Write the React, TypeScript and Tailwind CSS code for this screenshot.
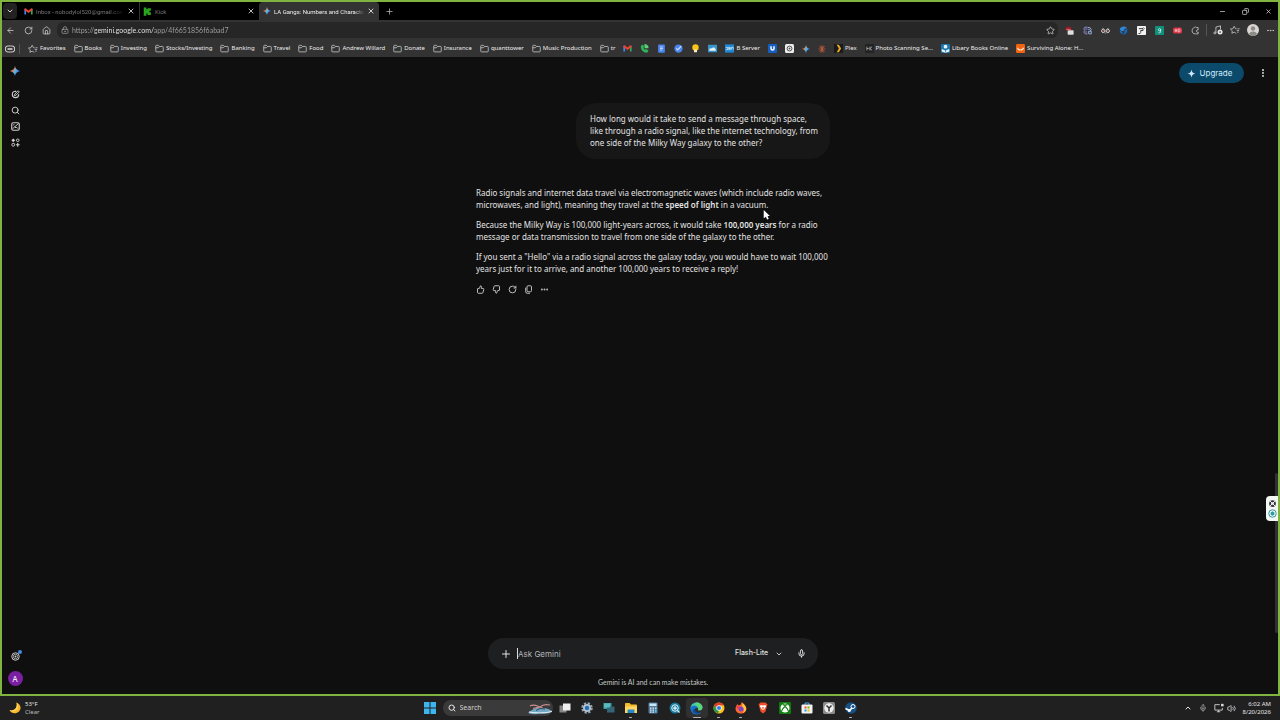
import { useState } from 'react';
import type { ReactNode } from 'react';
import {
  ArrowLeft,
  ChevronDown,
  ChevronUp,
  Copy,
  Ellipsis,
  EllipsisVertical,
  House,
  LockKeyhole,
  Mic,
  Minus,
  Plus,
  RotateCw,
  Search,
  Star,
  Volume2,
  X,
} from 'lucide-react';

interface Bookmark {
  label?: string;
  title: string;
  icon: ReactNode;
}

interface IconItem {
  title: string;
  icon: ReactNode;
  running?: boolean;
  active?: boolean;
}

function Svg({ className = 'size-[9px]', children }: { className?: string; children: ReactNode }) {
  return (
    <svg viewBox="0 0 24 24" className={`${className} shrink-0`} fill="none" aria-hidden="true">
      {children}
    </svg>
  );
}

const FolderIcon = () => (
  <Svg>
    <path d="M2 19V5.500a2 2 0 0 1 2-2h5l3 3h8a2 2 0 0 1 2 2V19a2 2 0 0 1-2 2H4a2 2 0 0 1-2-2zM2 10h7l3-3.500" stroke="#d0d0d0" strokeWidth="2" />
  </Svg>
);

const GmailIcon = () => (
  <Svg>
    <path d="M1 20V5l4.500 3v12z" fill="#4285f4" />
    <path d="M23 20V5l-4.500 3v12z" fill="#34a853" />
    <path d="M1 8V5c0-2 2-2.500 3.500-1.500L12 9l7.500-5.500C21 2.500 23 3 23 5v3l-11 8z" fill="#ea4335" />
  </Svg>
);

function Spark({ className, id }: { className?: string; id: string }) {
  return (
    <Svg className={className}>
      <defs>
        <linearGradient id={id} x1="1" y1="6" x2="23" y2="17" gradientUnits="userSpaceOnUse">
          <stop offset="0" stopColor="#f6c344" />
          <stop offset="0.3" stopColor="#ea6a5e" />
          <stop offset="0.48" stopColor="#5fc3c9" />
          <stop offset="0.7" stopColor="#4f8ff7" />
          <stop offset="1" stopColor="#3f7df0" />
        </linearGradient>
      </defs>
      <path d="M12 0c1.500 7 5 10.500 12 12-7 1.500-10.500 5-12 12C10.500 17 7 13.500 0 12 7 10.500 10.500 7 12 0z" fill={`url(#${id})`} />
    </Svg>
  );
}

const StarLines = () => (
  <Svg className="size-[10px]">
    <path d="M15 20l-5-2.800L4.500 20l1-6L1 9.800l6-1L10 3l3 5.800 3 .500M16 13h6M17 17h4M18 9h5" stroke="#cfcfcf" strokeWidth="1.800" strokeLinejoin="round" />
  </Svg>
);

const bookmarks: Bookmark[] = [
  { label: 'Favorites', title: 'Favorites', icon: <StarLines /> },
  { label: 'Books', title: 'Books', icon: <FolderIcon /> },
  { label: 'Investing', title: 'Investing', icon: <FolderIcon /> },
  { label: 'Stocks/Investing', title: 'Stocks/Investing', icon: <FolderIcon /> },
  { label: 'Banking', title: 'Banking', icon: <FolderIcon /> },
  { label: 'Travel', title: 'Travel', icon: <FolderIcon /> },
  { label: 'Food', title: 'Food', icon: <FolderIcon /> },
  { label: 'Andrew Willard', title: 'Andrew Willard', icon: <FolderIcon /> },
  { label: 'Donate', title: 'Donate', icon: <FolderIcon /> },
  { label: 'Insurance', title: 'Insurance', icon: <FolderIcon /> },
  { label: 'quanttower', title: 'quanttower', icon: <FolderIcon /> },
  { label: 'Music Production', title: 'Music Production', icon: <FolderIcon /> },
  { label: 'tr', title: 'tr', icon: <FolderIcon /> },
  { title: 'Gmail', icon: <GmailIcon /> },
  {
    title: 'Voice',
    icon: (
      <Svg>
        <path d="M2 5c0 10 6 18 17 18l4-6-7-4-3 2c-2-1-3-3-4-5l2-3-3-6z" fill="#2fb457" />
        <path d="M12 0a11 11 0 0 1 11 11H12z" fill="#5ad07c" />
      </Svg>
    ),
  },
  {
    title: 'Docs',
    icon: (
      <Svg>
        <rect x="3" y="1" width="18" height="22" rx="2" fill="#4a84ee" />
        <path d="M8 8h8M8 12h8M8 16h6" stroke="#dce8ff" strokeWidth="2" />
      </Svg>
    ),
  },
  {
    title: 'Tasks',
    icon: (
      <Svg>
        <circle cx="12" cy="12" r="11" fill="#4a84ee" />
        <path d="M6 12l4 4 9-10" stroke="#cfe0ff" strokeWidth="3" />
      </Svg>
    ),
  },
  {
    title: 'Keep',
    icon: (
      <Svg>
        <circle cx="12" cy="9" r="8.500" fill="#fcc419" />
        <path d="M8 15h8v7H8z" fill="#f5e9c0" />
      </Svg>
    ),
  },
  {
    title: 'Weather',
    icon: (
      <Svg>
        <rect x="0" y="2" width="24" height="20" fill="#3a93c8" />
        <path d="M3 17c0-5 4-7 7-5 2-4 9-3 9 1 3 0 3 5 0 5H5z" fill="#e3f1f8" />
      </Svg>
    ),
  },
  {
    label: 'B Server',
    title: 'B Server',
    icon: (
      <Svg>
        <rect x="0" y="1" width="24" height="22" fill="#1d87d6" />
        <path d="M2 9h5v6H2M9 15h5V9H9v3h5M17 15V9h5v6" stroke="#d6ecfb" strokeWidth="2" />
      </Svg>
    ),
  },
  {
    title: 'Bitwarden',
    icon: (
      <Svg>
        <rect width="24" height="24" rx="3" fill="#155ec0" />
        <path d="M8 6v6a4 4 0 0 0 8 0V6" stroke="#fff" strokeWidth="4" />
      </Svg>
    ),
  },
  {
    title: 'ChatGPT',
    icon: (
      <Svg>
        <rect width="24" height="24" rx="4" fill="#eee" />
        <circle cx="12" cy="12" r="6.500" stroke="#444" strokeWidth="2.500" />
        <circle cx="12" cy="12" r="2.500" fill="#555" />
      </Svg>
    ),
  },
  { title: 'Gemini', icon: <Spark id="spark-bookmark" className="size-2" /> },
  {
    title: 'Claude',
    icon: (
      <Svg className="size-2">
        <path d="M12 1v22M1 12h22M4 4l16 16M20 4L4 20M8 2l8 20M16 2L8 22" stroke="#c05a3e" strokeWidth="2.200" />
      </Svg>
    ),
  },
  {
    label: 'Plex',
    title: 'Plex',
    icon: (
      <Svg>
        <rect width="24" height="24" fill="#191a1c" />
        <path d="M7 2h6l6 10-6 10H7l6-10z" fill="#eba81c" />
      </Svg>
    ),
  },
  {
    label: 'Photo Scanning Se...',
    title: 'Photo Scanning Service',
    icon: (
      <Svg>
        <rect width="24" height="24" fill="#222" />
        <path d="M5 7v10M5 12h5M13 7v10M19 7l-6 5 6 5" stroke="#bbb" strokeWidth="2" />
      </Svg>
    ),
  },
  {
    label: 'Libary Books Online',
    title: 'Libary Books Online',
    icon: (
      <Svg>
        <rect width="24" height="24" rx="3" fill="#1b77ad" />
        <circle cx="12" cy="7" r="5" fill="#e8f3f9" />
        <path d="M2 13l10 4 10-4v7l-10 3-10-3z" fill="#e8f3f9" />
        <path d="M12 14v8" stroke="#1b77ad" strokeWidth="2" />
      </Svg>
    ),
  },
  {
    label: 'Surviving Alone: H...',
    title: 'Surviving Alone',
    icon: (
      <Svg>
        <rect width="24" height="24" rx="3" fill="#f0640f" />
        <path d="M4 10c2 8 14 8 16 0" stroke="#fbe3cf" strokeWidth="3" />
      </Svg>
    ),
  },
];

const extensions: IconItem[] = [
  {
    title: 'Ad blocker',
    icon: (
      <Svg>
        <path d="M2 4l6-3 9 3v8H2z" fill="#9e1b24" />
        <rect x="7" y="11" width="16" height="12" rx="2" fill="#dedede" />
        <path d="M3 9h12" stroke="#e88" strokeWidth="2" />
      </Svg>
    ),
  },
  {
    title: 'Translate',
    icon: (
      <Svg>
        <path d="M12 3H5L2 8l3 4-3 4 4 5h6M6 8h6M6 16h5" stroke="#8f8fe0" strokeWidth="2.500" />
        <path d="M13 4h5l4 5-2 4M14 9h4M16 21h6v-7h-7v7" stroke="#9ab6e8" strokeWidth="2.500" />
      </Svg>
    ),
  },
  {
    title: 'Reader',
    icon: (
      <Svg>
        <circle cx="6" cy="13" r="4.500" stroke="#ddd" strokeWidth="2.500" />
        <circle cx="18" cy="13" r="4.500" stroke="#ddd" strokeWidth="2.500" />
        <path d="M4 6l4 2M20 6l-4 2M10 19h4" stroke="#aaa" strokeWidth="2" />
        <circle cx="6" cy="13" r="1.800" fill="#d66" />
        <circle cx="18" cy="13" r="1.800" fill="#d66" />
      </Svg>
    ),
  },
  {
    title: 'Sync',
    icon: (
      <Svg>
        <path d="M2 8c3-8 15-9 20-2-5-1-9 1-9 7H7c-3 0-4-2-5-5z" fill="#2f86d6" />
        <path d="M22 9c2 9-6 16-14 13 5-1 7-4 6-9l4-5z" fill="#1567b8" />
        <path d="M2 12c0 5 3 8 6 9 2-2 2-4 1-6z" fill="#1a72c4" />
      </Svg>
    ),
  },
  {
    title: 'Notes',
    icon: (
      <Svg>
        <rect width="24" height="24" rx="2" fill="#f2f2f2" />
        <path d="M5 7h11v5h-6v6M4 20h5M17 4l3 3" stroke="#333" strokeWidth="2.500" />
      </Svg>
    ),
  },
  {
    title: 'Grammar',
    icon: (
      <Svg>
        <rect width="24" height="24" rx="2" fill="#10917c" />
        <circle cx="12" cy="10" r="3" stroke="#dff5f0" strokeWidth="2" />
        <path d="M15 8v8c0 3-5 3-6 1" stroke="#dff5f0" strokeWidth="2" />
      </Svg>
    ),
  },
  {
    title: 'HD video',
    icon: (
      <Svg>
        <rect y="4" width="24" height="16" rx="5" fill="#dc3747" />
        <path d="M6 8v8M6 12h4M10 8v8M14 8v8h2c4 0 4-8 0-8z" stroke="#ffc9cd" strokeWidth="2" />
      </Svg>
    ),
  },
  {
    title: 'Extensions',
    icon: (
      <Svg>
        <path d="M19 8V4h-5a3 3 0 0 0-5 0C4 6 3 9 3 13c0 5 3 8 9 8h7v-5a3 3 0 1 1 0-5z" stroke="#cfcfcf" strokeWidth="2" />
      </Svg>
    ),
  },
];

const taskbarApps: IconItem[] = [
  {
    title: 'Task View',
    icon: (
      <Svg className="size-3">
        <rect x="1" y="7" width="14" height="14" fill="#858585" />
        <rect x="8" y="3" width="15" height="14" fill="#efefef" />
      </Svg>
    ),
  },
  {
    title: 'Settings',
    icon: (
      <Svg className="size-3">
        <circle cx="12" cy="12" r="9.500" stroke="#93a6b5" strokeWidth="4" strokeDasharray="4.500 3" />
        <circle cx="12" cy="12" r="8" fill="#b5c4ce" />
        <circle cx="12" cy="12" r="4.500" fill="#2471b8" />
      </Svg>
    ),
  },
  {
    title: 'Remote Desktop',
    icon: (
      <Svg className="size-3">
        <rect x="1" y="2" width="16" height="12" rx="1" fill="#3f9ea5" />
        <rect x="8" y="9" width="15" height="12" rx="1" fill="#356675" />
        <rect x="2" y="3" width="12" height="8" fill="#57bcc0" />
      </Svg>
    ),
  },
  {
    title: 'File Explorer',
    running: true,
    icon: (
      <Svg className="size-3">
        <path d="M0 4c0-1 1-2 2-2h7l3 3h10c1 0 2 1 2 2v14H0z" fill="#f5bd2d" />
        <path d="M0 9h24v12c0 1-1 1-2 1H2c-1 0-2 0-2-1z" fill="#fcd765" />
        <path d="M5 22v-5c0-1 1-2 2-2h10c1 0 2 1 2 2v5z" fill="#2587ca" />
      </Svg>
    ),
  },
  {
    title: 'Calculator',
    icon: (
      <Svg className="size-3">
        <rect x="3" y="1" width="18" height="22" rx="2" fill="#557b98" />
        <rect x="5" y="3" width="14" height="5" fill="#c7e6f7" />
        <path d="M6 12h3M11 12h3M16 12h3M6 16h3M11 16h3M6 20h3M11 20h3" stroke="#dcebf4" strokeWidth="2.500" />
        <path d="M17.500 15v6" stroke="#4fbdf5" strokeWidth="3" />
      </Svg>
    ),
  },
  {
    title: 'Screen Capture',
    icon: (
      <Svg className="size-3">
        <circle cx="12" cy="12" r="11" fill="#177a9e" />
        <circle cx="12" cy="12" r="6.500" stroke="#e5f6fb" strokeWidth="2" />
        <path d="M12 8v8M8 12h8M17 17l4 4" stroke="#e5f6fb" strokeWidth="2.500" />
      </Svg>
    ),
  },
  {
    title: 'Edge',
    running: true,
    active: true,
    icon: (
      <Svg className="size-[13px]">
        <path d="M1 12C1 5 6 1 12 1c7 0 11 5 11 9 0 5-5 6-8 5 1-5-4-7-8-5-4 1-6 4-6 2z" fill="#3fc6b8" />
        <path d="M12 1c7 0 11 5 11 9 0 5-5 6-8 5 1-3 0-8-6-8z" fill="#5bd67b" />
        <path d="M1 12c0-4 4-6 8-5 3 0 5 2 5 4-4-2-7 4-3 8 3 3 7 2 10 0-2 3-5 4-9 4C6 23 1 18 1 12z" fill="#1674cf" />
        <path d="M10 12c-3 5 2 10 9 7-3 3-8 4-12 1-3-3-2-7 3-8z" fill="#0c4c9c" />
      </Svg>
    ),
  },
  {
    title: 'Chrome',
    running: true,
    icon: (
      <Svg className="size-3">
        <circle cx="12" cy="12" r="11" fill="#fbc116" />
        <path d="M2.500 6.500a11 11 0 0 1 19 0L12 7l-4.500 7z" fill="#e33b2e" />
        <path d="M2.500 6.500L7.500 15l4.500 2-2 6A11 11 0 0 1 2.500 6.500z" fill="#279847" />
        <circle cx="12" cy="12" r="5.500" fill="#fff" />
        <circle cx="12" cy="12" r="4.200" fill="#327fe8" />
      </Svg>
    ),
  },
  {
    title: 'Firefox',
    running: true,
    icon: (
      <Svg className="size-3">
        <path d="M3 7l2-3 2 3 5-2c0-2 1-4 2-5 1 3 8 6 9 13 0 6-5 10-11 10S1 19 1 13c0-2 1-4 2-6z" fill="#ff6a2b" />
        <path d="M15 2c4 3 8 7 7 13-1 4-4 6-6 7 3-6 2-10-2-13z" fill="#ffc83c" />
        <circle cx="12" cy="14" r="5" fill="#7a45c8" />
        <path d="M3 8c3-1 6 0 8 2-3 0-4 2-3 4-4 1-6-2-5-6z" fill="#ef3f55" />
      </Svg>
    ),
  },
  {
    title: 'Brave',
    icon: (
      <Svg className="size-3">
        <path d="M7 1h10l4 4-1 3-3 11-5 4-5-4L4 8 3 5z" fill="#f04e2b" />
        <path d="M7 6l5 1 5-1 1 3-3 5-3 2-3-2-3-5z" fill="#fff" />
        <path d="M9 10l3 1 3-1-3 5z" fill="#f04e2b" />
      </Svg>
    ),
  },
  {
    title: 'Xbox',
    icon: (
      <Svg className="size-3">
        <rect width="24" height="24" rx="2" fill="#107c10" />
        <circle cx="12" cy="12" r="9" fill="#fff" />
        <path d="M5 19c1-5 4-8 7-10 3 2 6 5 7 10M7 5c2 0 4 1 5 2 1-1 3-2 5-2" stroke="#107c10" strokeWidth="2.500" />
      </Svg>
    ),
  },
  {
    title: 'Microsoft Store',
    icon: (
      <Svg className="size-3">
        <path d="M8 6V2h8v4" stroke="#4aa9e8" strokeWidth="2" />
        <rect x="1" y="5" width="22" height="18" rx="2" fill="#f2f2f2" />
        <path d="M7 9h4v4H7z" fill="#f25022" />
        <path d="M13 9h4v4h-4z" fill="#7fba00" />
        <path d="M7 15h4v4H7z" fill="#00a4ef" />
        <path d="M13 15h4v4h-4z" fill="#ffb900" />
      </Svg>
    ),
  },
  {
    title: 'Clock',
    icon: (
      <Svg className="size-3">
        <rect width="24" height="24" rx="3" fill="#8b8b8b" />
        <circle cx="12" cy="12" r="9.500" fill="#ededed" />
        <path d="M7 7l5 5 5-5M12 12v7" stroke="#333" strokeWidth="3" />
      </Svg>
    ),
  },
  {
    title: 'Steam',
    running: true,
    icon: (
      <Svg className="size-3">
        <circle cx="12" cy="12" r="11.500" fill="#155287" />
        <circle cx="16" cy="9" r="4" stroke="#fff" strokeWidth="2" />
        <path d="M1 13l8 4 5-5" stroke="#fff" strokeWidth="3.500" />
        <circle cx="8.500" cy="17" r="3" fill="#fff" />
      </Svg>
    ),
  },
];

const sidebarItems: IconItem[] = [
  {
    title: 'New chat',
    icon: (
      <Svg>
        <path d="M14 3.500H11A8.500 8.500 0 1 0 20.500 12v-1" stroke="currentColor" strokeWidth="3" />
        <path d="M9 15l1-4 9-9 3 3-9 9z" stroke="currentColor" strokeWidth="2.500" />
      </Svg>
    ),
  },
  { title: 'Search chats', icon: <Search className="size-[9px]" strokeWidth={2.500} /> },
  {
    title: 'Images',
    icon: (
      <Svg>
        <rect x="2" y="2" width="20" height="20" rx="4" stroke="currentColor" strokeWidth="3" />
        <path d="M5 18l5-6 3 4 2-2 4 4M20 4L10 13" stroke="currentColor" strokeWidth="2.500" />
        <circle cx="7.500" cy="7.500" r="1.800" fill="currentColor" />
      </Svg>
    ),
  },
  {
    title: 'Apps',
    icon: (
      <Svg>
        <path d="M6 1L11 6l-5 5-5-5z" fill="currentColor" />
        <circle cx="18" cy="6" r="3.500" stroke="currentColor" strokeWidth="2.500" />
        <rect x="2.500" y="14.500" width="7" height="7" rx="2" stroke="currentColor" strokeWidth="2.500" />
        <path d="M18 13v10M13 18h10" stroke="currentColor" strokeWidth="3" />
      </Svg>
    ),
  },
];

const replyActions: IconItem[] = [
  {
    title: 'Good response',
    icon: (
      <Svg>
        <path d="M4 10l5-1 3-7c3 0 3 3 2 7h5c2 0 2 2 1.500 4l-2 7c0 1-1 2-2 2H6c-1 0-2-1-2-2z" stroke="currentColor" strokeWidth="2.500" strokeLinejoin="round" />
      </Svg>
    ),
  },
  {
    title: 'Bad response',
    icon: (
      <Svg>
        <path d="M20 14l-5 1-3 7c-3 0-3-3-2-7H5c-2 0-2-2-1.500-4l2-7c0-1 1-2 2-2H18c1 0 2 1 2 2z" stroke="currentColor" strokeWidth="2.500" strokeLinejoin="round" />
      </Svg>
    ),
  },
  { title: 'Redo', icon: <RotateCw className="size-[9px]" strokeWidth={2.500} /> },
  {
    title: 'Copy',
    icon: (
      <Svg>
        <rect x="8" y="2" width="12" height="16" rx="3" stroke="currentColor" strokeWidth="2.500" />
        <path d="M4.500 7v11a4 4 0 0 0 4 4H16" stroke="currentColor" strokeWidth="2.500" />
      </Svg>
    ),
  },
  { title: 'More', icon: <Ellipsis className="size-[9px]" strokeWidth={3} /> },
];

function TabBar() {
  return (
    <div className="flex h-[18px] items-stretch bg-black font-['Roboto',sans-serif]">
      <button aria-label="Search tabs" className="my-px ml-px mr-1 flex w-[14px] items-center justify-center rounded-sm bg-[#222]">
        <ChevronDown className="size-2 text-[#d6d6d6]" strokeWidth={3} />
      </button>
      <div className="flex w-[119px] items-center gap-[3px] border-r border-[#333] pl-[3px] pr-1 text-[#777]">
        <GmailIcon />
        <span className="min-w-0 flex-1 whitespace-nowrap [mask-image:linear-gradient(to_right,black_85%,transparent)]">Inbox - nobodylol520@gmail.con</span>
        <button aria-label="Close Inbox"><X className="size-2 text-[#ddd]" strokeWidth={2.500} /></button>
      </div>
      <div className="flex w-[119px] items-center gap-[3px] pl-[3px] pr-1 text-[#777]">
        <Svg>
          <path d="M2 1h7v5h3V3h9v7h-4v4h4v7h-9v-4H9v6H2z" fill="#28a51c" />
        </Svg>
        <span className="flex-1">Kick</span>
        <button aria-label="Close Kick"><X className="size-2 text-[#ddd]" strokeWidth={2.500} /></button>
      </div>
      <div className="flex w-[120px] items-center gap-[3px] rounded-t-sm bg-[#333] pl-1 pr-1 text-[#eee]">
        <Spark id="spark-tab" className="size-2" />
        <span className="min-w-0 flex-1 whitespace-nowrap [mask-image:linear-gradient(to_right,black_90%,transparent)]">LA Gangs: Numbers and Characte</span>
        <button aria-label="Close LA Gangs"><X className="size-2 text-[#eee]" strokeWidth={2.500} /></button>
      </div>
      <button aria-label="New tab" className="ml-1 flex w-3 items-center justify-center">
        <Plus className="size-[9px] text-[#bbb]" />
      </button>
      <div className="ml-auto flex items-center gap-4 pr-[6px] text-[#d6d6d6]">
        <button aria-label="Minimize"><Minus className="size-[7px]" strokeWidth={2.500} /></button>
        <button aria-label="Restore"><Copy className="size-[7px] -scale-x-100" strokeWidth={2.500} /></button>
        <button aria-label="Close window"><X className="size-[7px]" strokeWidth={2.500} /></button>
      </div>
    </div>
  );
}

function Toolbar() {
  return (
    <div className="flex h-5 items-center bg-[#333] text-[#d0d0d0]">
      <div className="flex items-center gap-[9px] pl-1 pr-[6px]">
        <button aria-label="Back"><ArrowLeft className="size-[9px]" strokeWidth={2} /></button>
        <button aria-label="Refresh"><RotateCw className="size-[9px]" strokeWidth={2} /></button>
        <button aria-label="Home"><House className="size-[9px]" strokeWidth={2} /></button>
      </div>
      <div className="flex h-4 flex-1 items-center gap-[3px] rounded-md bg-[#262626] pl-1 pr-[3px]">
        <LockKeyhole className="size-2 text-[#aaa]" />
        <input
          aria-label="Address"
          defaultValue="https://gemini.google.com/app/4f6651856f6abad7"
          className="flex-1 bg-[linear-gradient(to_right,#a3a3a3_23px,#f2f2f2_23px,#f2f2f2_82px,#a3a3a3_82px)] bg-clip-text font-['Lato',sans-serif] text-[7px] text-transparent outline-none"
        />
        <button aria-label="Add to favorites"><Star className="size-[9px]" /></button>
      </div>
      <div className="flex items-center gap-[9px] pl-[7px] pr-[6px]">
        {extensions.map((ext) => (
          <button key={ext.title} aria-label={ext.title}>{ext.icon}</button>
        ))}
      </div>
      <div className="flex items-center gap-[7px] border-l border-[#555] pl-[6px] pr-[3px]">
        <button aria-label="Media">
          <Svg className="size-[10px]">
            <path d="M7 19V5l11-3v8" stroke="#cfcfcf" strokeWidth="2" />
            <circle cx="4.500" cy="19" r="2.500" stroke="#cfcfcf" strokeWidth="2" />
            <circle cx="17" cy="17" r="6" fill="#e8e8e8" />
            <circle cx="17" cy="17" r="2" fill="#333" />
          </Svg>
        </button>
        <button aria-label="Favorites list"><StarLines /></button>
        <button aria-label="Profile">
          <Svg className="size-3">
            <circle cx="12" cy="12" r="12" fill="#d9d6d2" />
            <circle cx="12" cy="9" r="4.500" fill="#8d8b88" />
            <path d="M4 20c1-7 15-7 16 0-4 5-12 5-16 0z" fill="#8d8b88" />
          </Svg>
        </button>
        <button aria-label="Menu"><Ellipsis className="size-[9px]" /></button>
      </div>
    </div>
  );
}

function BookmarkBar() {
  return (
    <nav aria-label="Bookmarks" className="flex h-[17px] items-center gap-2 overflow-hidden bg-[#333] pl-[3px] text-[#eee]">
      <button aria-label="Games" className="border-r border-[#555] pr-1">
        <Svg className="size-[10px]">
          <rect x="1" y="5" width="22" height="14" rx="6" stroke="#ccc" strokeWidth="2.500" />
          <path d="M6 10h12v4H6z" fill="#ccc" />
        </Svg>
      </button>
      {bookmarks.map((item) => (
        <a key={item.title} href="#" aria-label={item.title} className="flex shrink-0 items-center gap-[2px] whitespace-nowrap">
          {item.icon}
          {item.label && <span>{item.label}</span>}
        </a>
      ))}
    </nav>
  );
}

function Sidebar() {
  return (
    <aside className="flex w-[29px] flex-col items-center pb-2 pr-[3px] pt-[9px] text-[#d0d0d0]">
      <a href="#" aria-label="Gemini home" className="mb-[14px]">
        <Spark id="spark-logo" className="size-[10px]" />
      </a>
      <div className="flex flex-col gap-[7px]">
        {sidebarItems.map((item) => (
          <button key={item.title} aria-label={item.title} className="flex">{item.icon}</button>
        ))}
      </div>
      <button aria-label="Settings" className="relative mb-[10px] mt-auto">
        <Svg>
          <circle cx="12" cy="12" r="10" stroke="currentColor" strokeWidth="2.500" />
          <circle cx="12" cy="12" r="6" stroke="currentColor" strokeWidth="2" />
          <circle cx="12" cy="12" r="2.500" fill="currentColor" />
        </Svg>
        <span className="absolute -right-0.5 -top-0.5 size-1 rounded-full bg-[#4a86e8]" />
      </button>
      <button aria-label="Account" className="flex size-[15px] items-center justify-center rounded-full bg-[#7b1fa2] text-[8px] text-white">A</button>
    </aside>
  );
}

function Conversation() {
  return (
    <div className="w-[354px] whitespace-nowrap font-['Noto_Sans',sans-serif] text-[8px] leading-3 text-[#e3e3e3]">
      <div className="ml-auto w-[254px] rounded-[20px] bg-[#171717] px-[14px] py-[10px]">
        How long would it take to send a message through space,
        <br />
        like through a radio signal, like the internet technology, from
        <br />
        one side of the Milky Way galaxy to the other?
      </div>
      <div className="mt-7 space-y-2">
        <p>
          Radio signals and internet data travel via electromagnetic waves (which include radio waves,
          <br />
          microwaves, and light), meaning they travel at the <b className="font-semibold">speed of light</b> in a vacuum.
        </p>
        <p>
          Because the Milky Way is 100,000 light-years across, it would take <b className="font-semibold">100,000 years</b> for a radio
          <br />
          message or data transmission to travel from one side of the galaxy to the other.
        </p>
        <p>
          If you sent a "Hello" via a radio signal across the galaxy today, you would have to wait 100,000
          <br />
          years just for it to arrive, and another 100,000 years to receive a reply!
        </p>
      </div>
      <div className="mt-[10px] flex gap-[7px] text-[#c4c7c5]">
        {replyActions.map((action) => (
          <button key={action.title} aria-label={action.title}>{action.icon}</button>
        ))}
      </div>
    </div>
  );
}

function Composer() {
  const [message, setMessage] = useState('');

  return (
    <div className="flex w-[330px] flex-col items-center">
      <form className="flex h-[31px] w-full items-center rounded-full bg-[#1e1f20] pl-3 pr-3 text-[#e3e3e3]">
        <button type="button" aria-label="Add files"><Plus className="size-3" /></button>
        <span className="ml-[5px] h-[11px] w-px bg-[#ddd]" />
        <input
          aria-label="Ask Gemini"
          placeholder="Ask Gemini"
          value={message}
          onChange={(e) => setMessage(e.target.value)}
          className="min-w-0 flex-1 text-[8px] outline-none placeholder:text-[#b4b6b8]"
        />
        <select aria-label="Model" className="appearance-none text-[7px] font-medium outline-none">
          <option>Flash-Lite</option>
        </select>
        <ChevronDown className="ml-[6px] mr-[14px] size-2" strokeWidth={2.500} />
        <button type="button" aria-label="Use microphone"><Mic className="size-[9px]" strokeWidth={2.500} /></button>
      </form>
      <p className="mt-2 font-['Lato',sans-serif] text-[7px] leading-[10px] text-[#c4c7c5]">Gemini is AI and can make mistakes.</p>
    </div>
  );
}

function GeminiPage() {
  return (
    <div className="relative flex min-h-0 flex-1 bg-[#0f0f0f] font-['Inter',sans-serif]">
      <Sidebar />
      <main className="relative flex flex-1 flex-col items-center pb-[7px] pt-[46px]">
        <header className="absolute right-[7px] top-[6px] flex items-center gap-[14px] text-[#d6d6d6]">
          <button className="flex h-5 w-[65px] items-center justify-center gap-1 rounded-full bg-[#0b4a6b] pr-1 text-[8px] text-[#cfe9fb]">
            <Svg>
              <path d="M12 1c1 7 4 10 11 11-7 1-10 4-11 11-1-7-4-10-11-11 7-1 10-4 11-11z" fill="currentColor" />
            </Svg>
            Upgrade
          </button>
          <button aria-label="More options"><EllipsisVertical className="size-[10px]" strokeWidth={3} /></button>
        </header>
        <Conversation />
        <div className="mt-auto">
          <Composer />
        </div>
      </main>
      <div className="flex w-[3px] flex-col pb-[61px]">
        <div className="mt-auto h-40 rounded-full bg-[#303030]" />
      </div>
      <div className="absolute bottom-[173px] right-0 flex h-[25px] w-3 flex-col items-center justify-center gap-px rounded-l-sm bg-[#f4f8f4]">
        <button aria-label="Dismiss">
          <Svg>
            <circle cx="12" cy="12" r="9" fill="#37333f" />
            <path d="M5 5l14 14M19 5L5 19" stroke="#f4f8f4" strokeWidth="2.500" />
            <circle cx="12" cy="12" r="3.500" fill="#f4f8f4" />
          </Svg>
        </button>
        <button aria-label="Assistant">
          <Svg>
            <circle cx="12" cy="12" r="10" stroke="#2a8f9c" strokeWidth="2.500" />
            <path d="M7 9l5-3 5 3v6l-5 3-5-3z" fill="#2a9d9d" />
          </Svg>
        </button>
      </div>
      <svg viewBox="0 0 12 18" className="absolute left-[761px] top-[153px] h-[10px] w-[7px]" aria-hidden="true">
        <path d="M1 0v15l4-3 2 5 3-1-2-5h4z" fill="#fff" />
      </svg>
    </div>
  );
}

function Taskbar() {
  return (
    <footer className="flex h-6 shrink-0 items-center bg-[#202020] leading-2 text-[#e6e6e6]">
      <div className="flex flex-1 items-center gap-1 pl-[9px]">
        <Svg className="size-3">
          <path d="M15 1c8 3 11 12 5 18-6 6-16 4-19-3 8 3 17-3 14-15z" fill="#fbb62c" />
          <path d="M15 1c5 5 5 14-3 17-4 2-8 1-11-2 8 3 17-3 14-15z" fill="#fdd65b" />
        </Svg>
        <div>
          <div>53°F</div>
          <div className="text-[#bbb]">Clear</div>
        </div>
      </div>
      <div className="flex h-full items-center pl-[5px]">
        <button aria-label="Start" className="mr-[7px]">
          <Svg className="size-3">
            <path d="M0 0h11v11H0zM13 0h11v11H13zM0 13h11v11H0zM13 13h11v11H13z" fill="#3fb5f0" />
          </Svg>
        </button>
        <label className="mr-[1px] flex h-4 w-[110px] items-center gap-1 rounded-full bg-[#3a3a3a] pl-[5px]">
          <Search className="size-2 shrink-0" strokeWidth={3} />
          <input aria-label="Search" placeholder="Search" className="w-0 flex-1 text-[7px] outline-none placeholder:text-[#d0d0d0]" />
          <svg viewBox="0 0 52 28" className="h-[14px] w-[26px]" fill="none" aria-hidden="true">
            <path d="M2 24c8-8 18-12 30-10 8 0 14 3 18 6-4 6-16 6-24 5-8 2-16 2-24-1z" fill="#71a8c4" />
            <path d="M4 22c12 2 30 3 46-1" stroke="#e9eef0" strokeWidth="2" />
            <path d="M6 10c8-5 14 0 20 2 6-6 12-6 20-4M12 15l14-3 8 4" stroke="#c98f92" strokeWidth="2.500" />
            <path d="M18 19l8-4 10 1" stroke="#23475b" strokeWidth="2" />
          </svg>
        </label>
        {taskbarApps.map((app) => (
          <button
            key={app.title}
            aria-label={app.title}
            className={`relative flex h-5 w-[22px] items-center justify-center rounded-sm ${app.active ? 'bg-[#303030]' : ''}`}
          >
            {app.icon}
            {app.running && (
              <span className={`absolute bottom-0 h-px rounded-full bg-[#b5b5b5] ${app.active ? 'w-2' : 'w-[3px]'}`} />
            )}
          </button>
        ))}
      </div>
      <div className="flex flex-1 items-center justify-end pr-[9px]">
        <ChevronUp className="mr-[7px] size-2" strokeWidth={3} />
        <Mic className="mr-[7px] size-2 text-[#bbb]" />
        <Svg className="size-[10px]">
          <path d="M14 4H2v13h18v-5M7 21h8M11 17v4" stroke="#ddd" strokeWidth="2" />
          <path d="M17 2h6v6h-6z" fill="#ddd" />
        </Svg>
        <Volume2 className="ml-[3px] mr-[7px] size-[9px]" />
        <div className="text-right">
          <div>6:02 AM</div>
          <div>8/20/2026</div>
        </div>
      </div>
    </footer>
  );
}

export default function App() {
  return (
    <div className="flex h-screen flex-col overflow-hidden bg-[#202020] font-['Noto_Sans',sans-serif] text-[6px]">
      <div className="flex min-h-0 flex-1 flex-col border-2 border-[#7fb441]">
        <TabBar />
        <Toolbar />
        <BookmarkBar />
        <GeminiPage />
      </div>
      <Taskbar />
    </div>
  );
}
